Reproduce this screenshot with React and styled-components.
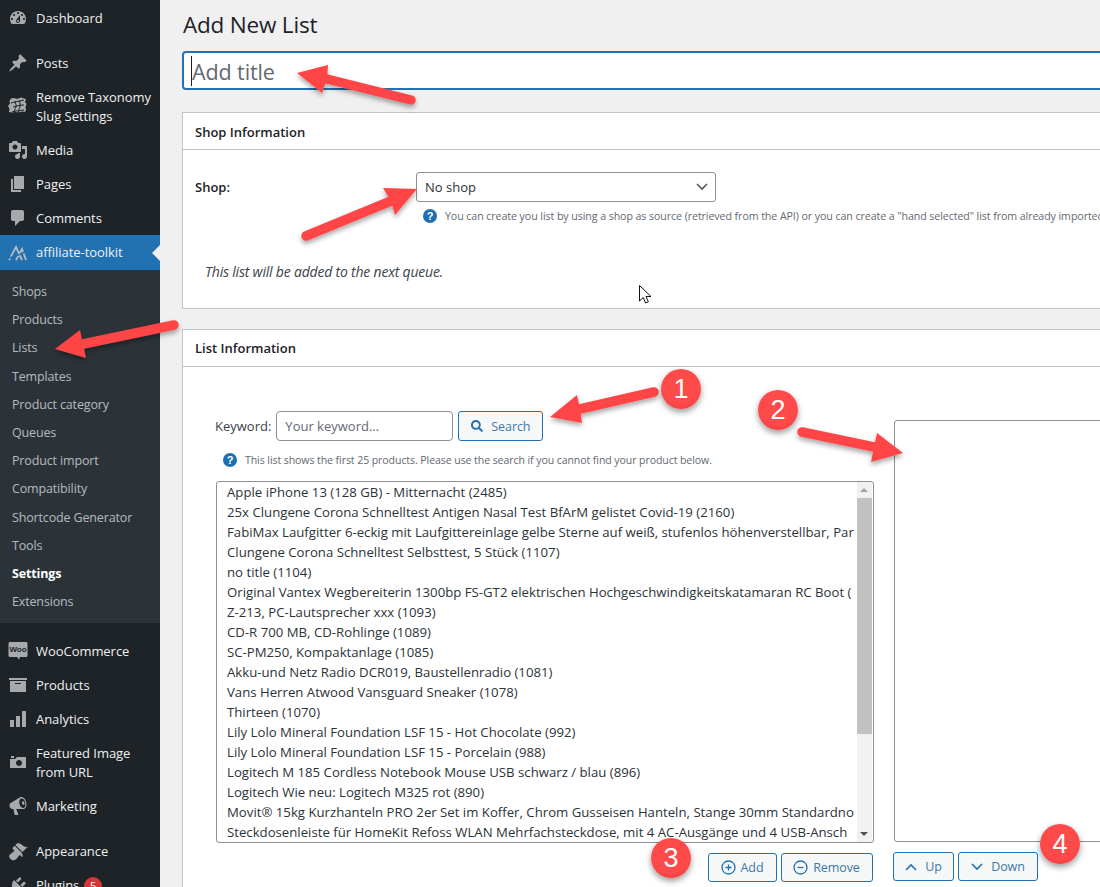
import styled, { createGlobalStyle } from 'styled-components';
import { FaSearch } from 'react-icons/fa';

const GlobalStyle = createGlobalStyle`
  html, body {
    margin: 0;
    padding: 0;
    background: #f0f0f1;
    overflow: hidden;
  }
  * {
    box-sizing: border-box;
  }
`;

const Page = styled.div`
  position: relative;
  display: flex;
  width: 1100px;
  height: 887px;
  overflow: hidden;
  background: #f0f0f1;
  font-family: 'Open Sans', 'Noto Sans', sans-serif;
  font-size: 13px;
  color: #3c434a;
`;

const Sidebar = styled.nav`
  flex: 0 0 160px;
  background: #1d2327;
  padding-top: 1px;
`;

const MenuItem = styled.div`
  display: flex;
  align-items: center;
  gap: 8px;
  min-height: 34px;
  padding: ${({ $roomy }) => ($roomy ? '7.5px' : '7px')} 6px ${({ $roomy }) => ($roomy ? '7.5px' : '7px')} 8px;
  position: relative;
  margin-top: ${({ $sep }) => ($sep ? '11px' : '0')};
  color: #f0f0f1;
  background: ${({ $active }) => ($active ? '#2271b1' : 'transparent')};
  font-size: 13px;
  line-height: 19px;
  letter-spacing: -0.05px;
  svg {
    flex: 0 0 20px;
    fill: #a7aaad;
  }
  ${({ $active }) => $active && `
    svg { fill: #c3c4c7; }
    &::after {
      content: '';
      position: absolute;
      right: 0;
      top: 10px;
      border: 8px solid transparent;
      border-right-color: #f0f0f1;
      border-left: 0;
    }
  `}
`;

const SubMenu = styled.div`
  display: flex;
  flex-direction: column;
  background: #2c3338;
  padding: 8px 0 7px;
`;

const SubItem = styled.div`
  height: 28.2px;
  padding: 0 12px;
  line-height: 28px;
  font-size: 12.5px;
  letter-spacing: -0.15px;
  color: ${({ $current }) => ($current ? '#fff' : 'rgba(240, 246, 252, 0.7)')};
  font-weight: ${({ $current }) => ($current ? 700 : 400)};
`;

const Badge = styled.span`
  display: inline-block;
  width: 18px;
  height: 18px;
  margin-left: 5px;
  border-radius: 50%;
  background: #d63638;
  color: #fff;
  font-size: 11px;
  line-height: 18px;
  text-align: center;
`;

const Main = styled.main`
  flex: 0 0 1000px;
  padding: 0 0 0 22px;
`;

const Heading = styled.h1`
  margin: 0;
  height: 51px;
  padding-left: 1px;
  font-size: 22.5px;
  font-weight: 400;
  line-height: 50px;
  letter-spacing: -0.2px;
  color: #1d2327;
`;

const TitleField = styled.div`
  display: flex;
  align-items: center;
  height: 39px;
  padding: 1px 0 0 7px;
  background: #fff;
  border: 2px solid #2271b1;
  border-radius: 4px;
  color: #646970;
  font-size: 21.500px;
  letter-spacing: -0.1px;
`;

const Caret = styled.span`
  width: 1px;
  height: 30px;
  background: #1d2327;
`;

const Panel = styled.section`
  margin-top: ${({ $top }) => $top}px;
  background: #fff;
  border: 1px solid #c3c4c7;
  height: ${({ $height }) => $height}px;
`;

const PanelHeader = styled.h2`
  margin: 0;
  height: 37px;
  padding-left: 12px;
  border-bottom: 1px solid #c3c4c7;
  font-size: 13px;
  font-weight: 600;
  line-height: ${({ $line }) => $line || 37}px;
  letter-spacing: 0;
  color: #1d2327;
`;

const ShopRow = styled.div`
  display: grid;
  grid-template-columns: 221px 300px;
  align-items: center;
  margin: 22px 0 0 12px;
  color: #1d2327;
  font-weight: 600;
`;

const Select = styled.div`
  display: flex;
  align-items: center;
  justify-content: space-between;
  height: 30px;
  padding: 0 7px 0 8px;
  background: #fff;
  border: 1px solid #8c8f94;
  border-radius: 3px;
  font-weight: 400;
  color: #2c3338;
`;

const HelpRow = styled.div`
  display: flex;
  align-items: center;
  gap: 8px;
  margin: ${({ $margin }) => $margin};
  height: 16px;
  white-space: nowrap;
  font-size: ${({ $size }) => $size}px;
  letter-spacing: -0.08px;
  color: #646970;
`;

const Note = styled.p`
  margin: 39px 0 0 22px;
  font-style: italic;
  font-size: 14px;
  letter-spacing: -0.2px;
  line-height: 18px;
  color: #3c434a;
`;

const ListBody = styled.div`
  display: grid;
  grid-template-columns: 657.500px 1fr;
  column-gap: 20.500px;
  padding: 44px 0 0 33px;
`;

const Column = styled.div`
  display: flex;
  flex-direction: column;
`;

const SearchRow = styled.div`
  display: flex;
  align-items: center;
  height: 30px;
  margin-left: -1px;
`;

const KeywordField = styled.div`
  width: 177px;
  height: 30px;
  margin: 0 5px;
  padding: 0 8px;
  border: 1px solid #8c8f94;
  border-radius: 4px;
  line-height: 28px;
  color: #646970;
`;

const Button = styled.div`
  display: flex;
  align-items: center;
  justify-content: center;
  gap: ${({ $gap }) => $gap || 6}px;
  width: ${({ $width }) => $width}px;
  height: ${({ $h }) => $h || 29}px;
  background: #f6f7f7;
  border: 1px solid #2271b1;
  border-radius: 3px;
  color: #3a7aab;
  font-size: 12.500px;
  letter-spacing: -0.1px;
  svg {
    flex: none;
    color: #2271b1;
  }
`;

const ListBox = styled.div`
  position: relative;
  display: flex;
  height: 362px;
  background: #fff;
  border: 1px solid #8c8f94;
  border-radius: 3px;
  overflow: hidden;
`;

const Options = styled.div`
  flex: 1;
  min-width: 0;
  overflow: hidden;
`;

const Option = styled.div`
  height: 20px;
  padding: 0 0 0 10px;
  line-height: 20px;
  white-space: nowrap;
  font-size: 13.200px;
  color: #2c3338;
`;

const Scrollbar = styled.div`
  display: flex;
  flex-direction: column;
  flex: 0 0 15px;
  margin-right: 1px;
  background: #f1f1f1;
`;

const ScrollArrow = styled.div`
  display: flex;
  align-items: center;
  justify-content: center;
  height: 16px;
  &::before {
    content: '';
    border-left: 4px solid transparent;
    border-right: 4px solid transparent;
    border-${({ $up }) => ($up ? 'bottom' : 'top')}: 4px solid ${({ $up }) => ($up ? '#a3a3a3' : '#505050')};
  }
`;

const ScrollThumb = styled.div`
  height: 236px;
  margin-bottom: auto;
  background: #c1c1c1;
`;

const ButtonRow = styled.div`
  display: flex;
  justify-content: ${({ $start }) => ($start ? 'flex-start' : 'flex-end')};
  gap: 4px;
  margin: ${({ $margin }) => $margin};
`;

const SelectedBox = styled.div`
  height: 422px;
  margin-top: 9px;
  background: #fff;
  border: 1px solid #8c8f94;
  border-radius: 3px 0 0 3px;
`;

const Number = styled.div`
  position: absolute;
  left: ${({ $x }) => $x - 20}px;
  top: ${({ $y }) => $y - 20}px;
  width: 40px;
  height: 40px;
  border-radius: 50%;
  background: radial-gradient(circle at 50% 35%, #ff4a4a 60%, #e63b3b 100%);
  box-shadow: 0 3px 6px rgba(0, 0, 0, 0.4);
  color: #fff;
  font-family: 'Liberation Sans', Arial, sans-serif;
  font-size: 27px;
  line-height: 40px;
  text-align: center;
`;

const Overlay = styled.svg`
  position: absolute;
  left: 0;
  top: 0;
  pointer-events: none;
`;

const Cursor = styled.svg`
  position: absolute;
  left: 639px;
  top: 285px;
`;

const icons = {
  dashboard: 'M3.76 16h12.48c1.1-1.37 1.76-3.11 1.76-5 0-4.42-3.58-8-8-8s-8 3.58-8 8c0 1.89.66 3.63 1.76 5zM10 4c.55 0 1 .45 1 1s-.45 1-1 1-1-.45-1-1 .45-1 1-1zM6 6c.55 0 1 .45 1 1s-.45 1-1 1-1-.45-1-1 .45-1 1-1zm8 0c.55 0 1 .45 1 1s-.45 1-1 1-1-.45-1-1 .45-1 1-1zm-5.37 5.55L12 7v6c0 1.1-.9 2-2 2s-2-.9-2-2c0-.57.24-1.08.63-1.45zM4 10c.55 0 1 .45 1 1s-.45 1-1 1-1-.45-1-1 .45-1 1-1zm12 0c.55 0 1 .45 1 1s-.45 1-1 1-1-.45-1-1 .45-1 1-1zm-5 3c0-.55-.45-1-1-1s-1 .45-1 1 .45 1 1 1 1-.45 1-1z',
  posts: 'M10.44 3.02l1.82-1.82 6.36 6.35-1.83 1.82c-1.05-.68-2.48-.57-3.41.36l-.75.75c-.92.93-1.04 2.35-.35 3.41l-1.83 1.82-2.41-2.41-2.8 2.79c-.42.42-3.38 2.71-3.8 2.29s1.86-3.39 2.28-3.81l2.79-2.79L4.1 9.36l1.83-1.82c1.05.69 2.48.57 3.4-.36l.75-.75c.93-.92 1.05-2.35.36-3.41z',
  media: 'M13 11V4c0-.55-.45-1-1-1h-1.67L9 1H5L3.67 3H2c-.55 0-1 .45-1 1v7c0 .55.45 1 1 1h10c.55 0 1-.45 1-1zM7 4.5c1.38 0 2.5 1.12 2.5 2.5S8.38 9.5 7 9.5 4.5 8.38 4.5 7 5.62 4.5 7 4.5zM14 6h5v10.5c0 1.38-1.12 2.5-2.5 2.5S14 17.88 14 16.5s1.12-2.5 2.5-2.5c.17 0 .34.02.5.05V9h-3V6zm-4 8.05V13h2v3.5c0 1.38-1.12 2.5-2.5 2.5S7 17.88 7 16.5 8.12 14 9.5 14c.17 0 .34.02.5.05z',
  pages: 'M6 15V2h10v13H6zm-1 1h8v2H3V5h2v11z',
  comments: 'M5 2h9c1.1 0 2 .9 2 2v7c0 1.1-.9 2-2 2h-2l-5 5v-5H5c-1.1 0-2-.9-2-2V4c0-1.1.9-2 2-2z',
  archive: 'M19 3v2H1V3h18zM2 6h16v11H2V6zm11 3V8H7v1h6z',
  chart: 'M18 18V2h-4v16h4zm-6 0V7H8v11h4zm-6 0v-7H2v7h4z',
  camera: 'M6 5V3H3v2h3zm12 10V4H9L7 6H2v9h16zm-7-8c1.66 0 3 1.34 3 3s-1.34 3-3 3-3-1.34-3-3 1.34-3 3-3z',
  megaphone: 'M18.15 5.94c.46 1.62.38 3.22-.02 4.48-.42 1.28-1.26 2.18-2.3 2.48-.16.06-.26.06-.4.06-.06.02-.12.02-.18.02-.06.02-.14.02-.22.02h-6.8l2.22 5.5c.02.14-.06.26-.14.34-.08.1-.24.16-.34.16H6.95c-.1 0-.26-.06-.34-.16-.08-.08-.16-.2-.14-.34l-1-5.5H4.25l-.02-.02c-.5.06-1.08-.18-1.54-.62s-.88-1.08-1.06-1.88c-.24-.8-.2-1.56-.02-2.2.2-.62.58-1.08 1.06-1.3l.02-.02 9-5.4c.1-.06.18-.1.24-.16.06-.04.14-.08.24-.12.16-.08.28-.12.5-.18 1.04-.3 2.24.1 3.22.98s1.84 2.24 2.26 3.86zm-2.58 5.98h-.02c.4-.1.74-.34 1.04-.7.58-.7.86-1.76.86-3.04-.02-.64-.1-1.3-.26-1.96-.34-1.2-.94-2.2-1.7-2.88-.38-.34-.78-.62-1.2-.76-.4-.12-.82-.16-1.2-.06s-.72.32-1 .68c-.56.7-.84 1.76-.84 3.04 0 .64.1 1.3.28 1.96.34 1.24.92 2.26 1.68 2.88.38.34.78.58 1.18.72.42.12.84.16 1.18.12zm-1.54-4.48c.2.7.64 1.24 1.14 1.38.2.08.42.08.6.02.16-.04.34-.14.46-.3.28-.34.4-.9.28-1.48-.12-.62-.44-1.14-.82-1.44-.2-.14-.4-.24-.6-.26-.2-.04-.42 0-.6.12-.42.3-.64 1.08-.46 1.96z',
  brush: 'M14.48 11.06L7.41 3.99l1.5-1.5c.5-.56 2.3-.47 3.51.32 1.21.8 1.43 1.28 2.91 2.1 1.18.64 2.45 1.26 4.45.85zm-.71.71L6.7 4.7 4.93 6.47c-.39.39-.39 1.02 0 1.41l1.06 1.06c.39.39.39 1.03 0 1.42-.6.6-1.43 1.11-2.21 1.69-.35.26-.7.53-1.01.84C1.43 13.23.1 15.6 2.5 18c2.5 2.4 4.77 1.07 6.1-.27.31-.31.58-.66.84-1.01.58-.78 1.09-1.61 1.69-2.21.39-.39 1.02-.39 1.41 0l1.06 1.06c.39.39 1.02.39 1.41 0z',
  plugin: 'M13.11 4.36L9.87 7.6 8 5.73l3.24-3.24c.35-.34 1.05-.2 1.56.32.52.51.66 1.21.31 1.55zm-8 1.77l.91-1.12 9.01 9.01-1.19.84c-.71.71-2.63 1.16-3.82 1.16H6.14L4.9 17.26c-.59.59-1.54.59-2.12 0-.59-.58-.59-1.53 0-2.12l1.24-1.24v-3.88c0-1.13.4-3.19 1.09-3.89zm7.26 3.97l3.24-3.24c.34-.35 1.04-.21 1.55.31.52.51.66 1.21.31 1.55l-3.24 3.25z',
};

const Dashicon = ({ name }) => (
  <svg width="20" height="20" viewBox="0 0 20 20" fillRule="evenodd">
    <path d={icons[name]} />
  </svg>
);

const TaxonomyIcon = () => (
  <svg width="20" height="20" viewBox="0 0 20 20">
    <path d="M3 1.500l3-.5 3 1 4-1.500 3 1 2 .5-1 3 1.500 2-1 3 .5 3-1 2-3-.5-3 1-3-.5-4 .5-3-.5.5-3.500L0 9l2-2.500-.5-2.500z" />
    <path d="M3 6c3-1 9-2 13-3M5 10c3-1 7-2 11-2M4 15c3-1 8-1.500 12-2M7 4c0 3 2 4 1 6s-2 3-1 6M12 3c-1 3 1 5 0 7s-2 3-1 6" fill="none" stroke="#1d2327" strokeWidth="1" />
  </svg>
);

const ToolkitIcon = () => (
  <svg width="20" height="20" viewBox="0 0 20 20">
    <path d="M1 17L8 4l6 13M8 17l6-11 4 11" fill="none" stroke="#b4bcc4" strokeWidth="1.800" />
    <path d="M0 15c7-1 14-4 20-8" fill="none" stroke="#2271b1" strokeWidth="1.500" />
  </svg>
);

const WooIcon = () => (
  <svg width="20" height="20" viewBox="0 0 20 20">
    <path d="M2 1h16c.8 0 1.500.6 1.500 1.500v12c0 .9-.7 1.500-1.500 1.500h-6l-1 2.500-2-2.500H2c-.8 0-1.500-.6-1.500-1.500v-12C.5 1.600 1.200 1 2 1z" />
    <text x="10" y="11.300" textAnchor="middle" fontSize="8" fontWeight="700" fontFamily="'Liberation Sans', sans-serif" fill="#1d2327">Woo</text>
  </svg>
);

const HelpIcon = () => (
  <svg width="14" height="14" viewBox="0 0 14 14">
    <circle cx="7" cy="7" r="7" fill="#1e6fb0" />
    <text x="7" y="11" textAnchor="middle" fontSize="11" fontWeight="700" fontFamily="'Liberation Sans', sans-serif" fill="#fff">?</text>
  </svg>
);

const CircleIcon = ({ plus }) => (
  <svg width="15" height="15" viewBox="0 0 15 15" fill="none" stroke="#2271b1" strokeWidth="1.300">
    <circle cx="7.500" cy="7.500" r="6.500" />
    <path d={plus ? 'M4.500 7.500h6M7.500 4.500v6' : 'M4.500 7.500h6'} />
  </svg>
);

const Chevron = ({ up, color = '#2271b1' }) => (
  <svg width="12" height="8" viewBox="0 0 12 8" fill="none" stroke={color} strokeWidth="1.600">
    <path d={up ? 'M1 7l5-5 5 5' : 'M1 1l5 5 5-5'} />
  </svg>
);

const Arrow = ({ tail, tip, a, b, neck }) => (
  <g filter="url(#arrowShadow)" fill="#ff4545">
    <path d={`M${a[0]} ${a[1]}L${tip[0]} ${tip[1]}L${b[0]} ${b[1]}L${neck[0]} ${neck[1]}Z`} />
    <line x1={tail[0]} y1={tail[1]} x2={neck[0]} y2={neck[1]} stroke="#ff4545" strokeWidth="9.500" strokeLinecap="round" />
  </g>
);

const arrows = [
  { tail: [411, 100], tip: [297, 73], a: [328, 65], b: [322, 93], neck: [327, 79] },
  { tail: [306, 236], tip: [417, 189], a: [383, 188], b: [395, 215], neck: [391, 201] },
  { tail: [174, 325], tip: [55, 349], a: [80, 330], b: [86, 358], neck: [83, 344] },
  { tail: [654, 392], tip: [550, 417], a: [577, 395], b: [582, 423], neck: [580, 409] },
  { tail: [802, 432], tip: [903, 453], a: [877, 433], b: [871, 462], neck: [874, 447] },
];

const products = [
  'Apple iPhone 13 (128 GB) - Mitternacht (2485)',
  '25x Clungene Corona Schnelltest Antigen Nasal Test BfArM gelistet Covid-19 (2160)',
  'FabiMax Laufgitter 6-eckig mit Laufgittereinlage gelbe Sterne auf weiß, stufenlos höhenverstellbar, Par',
  'Clungene Corona Schnelltest Selbsttest, 5 Stück (1107)',
  'no title (1104)',
  'Original Vantex Wegbereiterin 1300bp FS-GT2 elektrischen Hochgeschwindigkeitskatamaran RC Boot (',
  'Z-213, PC-Lautsprecher xxx (1093)',
  'CD-R 700 MB, CD-Rohlinge (1089)',
  'SC-PM250, Kompaktanlage (1085)',
  'Akku-und Netz Radio DCR019, Baustellenradio (1081)',
  'Vans Herren Atwood Vansguard Sneaker (1078)',
  'Thirteen (1070)',
  'Lily Lolo Mineral Foundation LSF 15 - Hot Chocolate (992)',
  'Lily Lolo Mineral Foundation LSF 15 - Porcelain (988)',
  'Logitech M 185 Cordless Notebook Mouse USB schwarz / blau (896)',
  'Logitech Wie neu: Logitech M325 rot (890)',
  'Movit® 15kg Kurzhanteln PRO 2er Set im Koffer, Chrom Gusseisen Hanteln, Stange 30mm Standardno',
  'Steckdosenleiste für HomeKit Refoss WLAN Mehrfachsteckdose, mit 4 AC-Ausgänge und 4 USB-Ansch',
];

const subItems = ['Shops', 'Products', 'Lists', 'Templates', 'Product category', 'Queues', 'Product import', 'Compatibility', 'Shortcode Generator', 'Tools', 'Settings', 'Extensions'];

const App = () => (
  <Page>
    <GlobalStyle />
    <Sidebar>
      <MenuItem><Dashicon name="dashboard" />Dashboard</MenuItem>
      <MenuItem $sep><Dashicon name="posts" />Posts</MenuItem>
      <MenuItem $roomy><TaxonomyIcon />Remove Taxonomy Slug Settings</MenuItem>
      <MenuItem><Dashicon name="media" />Media</MenuItem>
      <MenuItem><Dashicon name="pages" />Pages</MenuItem>
      <MenuItem><Dashicon name="comments" />Comments</MenuItem>
      <MenuItem $active $roomy><ToolkitIcon />affiliate-toolkit</MenuItem>
      <SubMenu>
        {subItems.map((item) => (
          <SubItem key={item} $current={item === 'Settings'}>{item}</SubItem>
        ))}
      </SubMenu>
      <MenuItem $sep><WooIcon />WooCommerce</MenuItem>
      <MenuItem><Dashicon name="archive" />Products</MenuItem>
      <MenuItem><Dashicon name="chart" />Analytics</MenuItem>
      <MenuItem $roomy><Dashicon name="camera" />Featured Image from URL</MenuItem>
      <MenuItem><Dashicon name="megaphone" />Marketing</MenuItem>
      <MenuItem $sep><Dashicon name="brush" />Appearance</MenuItem>
      <MenuItem><Dashicon name="plugin" /><span>Plugins<Badge>5</Badge></span></MenuItem>
    </Sidebar>

    <Main>
      <Heading>Add New List</Heading>
      <TitleField><Caret />Add title</TitleField>

      <Panel $top={22} $height={197}>
        <PanelHeader $line={38}>Shop Information</PanelHeader>
        <ShopRow>
          <span>Shop:</span>
          <Select>No shop<Chevron color="#50575e" /></Select>
        </ShopRow>
        <HelpRow $size={10.65} $margin="6px 0 0 240px">
          <HelpIcon />
          You can create you list by using a shop as source (retrieved from the API) or you can create a "hand selected" list from already imported
        </HelpRow>
        <Note>This list will be added to the next queue.</Note>
      </Panel>

      <Panel $top={20} $height={600}>
        <PanelHeader>List Information</PanelHeader>
        <ListBody>
          <Column>
            <SearchRow>
              Keyword:
              <KeywordField>Your keyword...</KeywordField>
              <Button $width={85} $h={30} $gap={8}><FaSearch size={12} />Search</Button>
            </SearchRow>
            <HelpRow $size={10.55} $margin="11px 0 13px 7px"><HelpIcon />This list shows the first 25 products. Please use the search if you cannot find your product below.</HelpRow>
            <ListBox>
              <Options>
                {products.map((item) => <Option key={item}>{item}</Option>)}
              </Options>
              <Scrollbar>
                <ScrollArrow $up />
                <ScrollThumb />
                <ScrollArrow />
              </Scrollbar>
            </ListBox>
            <ButtonRow $margin="10px 1px 0 0">
              <Button $width={69} $gap={5}><CircleIcon plus />Add</Button>
              <Button $width={92} $gap={5}><CircleIcon />Remove</Button>
            </ButtonRow>
          </Column>
          <Column>
            <SelectedBox />
            <ButtonRow $start $margin="10px 0 0 -1px">
              <Button $width={61} $gap={8}><Chevron up />Up</Button>
              <Button $width={80} $gap={8}><Chevron />Down</Button>
            </ButtonRow>
          </Column>
        </ListBody>
      </Panel>
    </Main>

    <Overlay width="1100" height="887" viewBox="0 0 1100 887">
      <defs>
        <filter id="arrowShadow" x="-20%" y="-40%" width="140%" height="200%">
          <feDropShadow dx="0" dy="3" stdDeviation="2.500" floodColor="#000" floodOpacity="0.35" />
        </filter>
      </defs>
      {arrows.map((arrow) => <Arrow key={arrow.tail.join()} {...arrow} />)}
    </Overlay>

    <Cursor width="12" height="20" viewBox="0 0 12 20">
      <path d="M.5.500v15.500l3.800-3.500 2.300 5.500 2.700-1.200-2.300-5.300h5z" fill="#fff" stroke="#111" strokeWidth="1" />
    </Cursor>

    <Number $x={681} $y={389}>1</Number>
    <Number $x={778} $y={410}>2</Number>
    <Number $x={671} $y={858}>3</Number>
    <Number $x={1060} $y={844}>4</Number>
  </Page>
);

export default App;
